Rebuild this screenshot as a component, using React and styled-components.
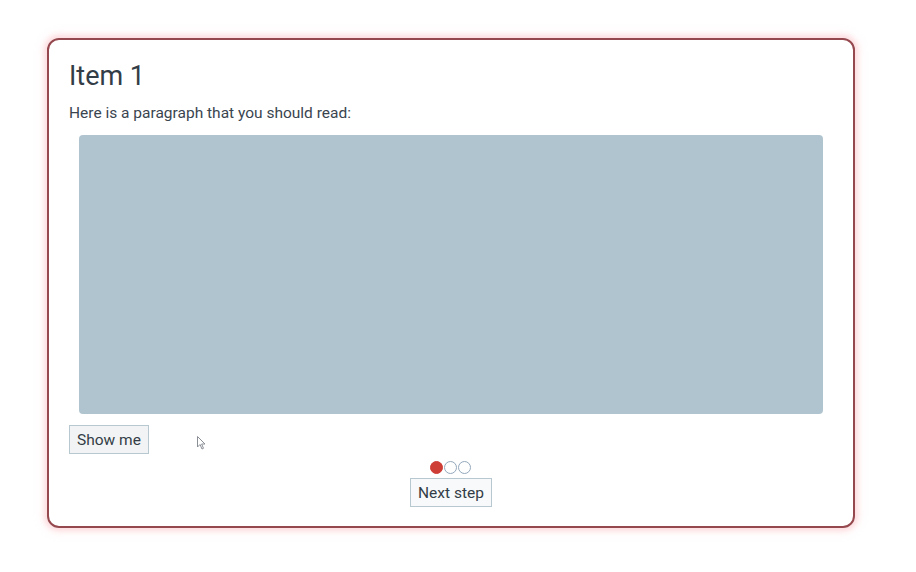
import React from "react";
import styled, { createGlobalStyle } from "styled-components";

const Global = createGlobalStyle`
  html, body { margin: 0; padding: 0; background: #ffffff; }
  body { font-family: Roboto, "Noto Sans", Arial, sans-serif; color: #333e48; }
`;

const Page = styled.div`
  position: relative;
  width: 916px;
  height: 572px;
  padding: 38px 0 0 47px;
  box-sizing: border-box;
`;

const Card = styled.div`
  width: 808px;
  height: 490px;
  box-sizing: border-box;
  border: 2px solid #95484d;
  border-radius: 12px;
  box-shadow: 0 0 4px 3px rgba(240, 120, 130, 0.16), 0 0 10px 4px rgba(255, 190, 195, 0.25);
  padding: 20px 20px 19px 20px;
  display: flex;
  flex-direction: column;
`;

const Title = styled.h2`
  margin: 0;
  font-size: 27px;
  font-weight: 400;
  line-height: 32px;
  color: #333d47;
`;

const Para = styled.p`
  margin: 11px 0 0 0;
  font-size: 15.5px;
  line-height: 20px;
  color: #3a4550;
`;

const Media = styled.div`
  margin: 12px 10px 0 10px;
  height: 279px;
  background: #b0c4d0;
  border-radius: 4px;
`;

const Button = styled.button`
  font-family: Roboto, "Noto Sans", Arial, sans-serif;
  font-size: 15.5px;
  color: #333d47;
  background: ${(p) => (p.$light ? "#f7f9fa" : "#f2f3f4")};
  border: 1px solid #b7c8d1;
  border-radius: 0;
  height: 29px;
  padding: 0 7px;
  cursor: pointer;
`;

const ShowRow = styled.div`
  margin-top: 11px;
  display: flex;
`;

const Footer = styled.div`
  margin-top: 7px;
  display: flex;
  flex-direction: column;
  align-items: center;
  gap: 4px;
`;

const Dots = styled.div`
  display: flex;
  gap: 1px;
  padding-right: 1px;
`;

const Dot = styled.span`
  width: 13px;
  height: 13px;
  box-sizing: border-box;
  border-radius: 50%;
  background: ${(p) => (p.$active ? "#cf3d37" : "#ffffff")};
  border: 1px solid ${(p) => (p.$active ? "#cf3d37" : "#93a8bb")};
`;

const Cursor = styled.svg`
  position: absolute;
  left: 197px;
  top: 436px;
`;

export default function App() {
  return (
    <>
      <Global />
      <Page>
        <Card>
          <Title>Item 1</Title>
          <Para>Here is a paragraph that you should read:</Para>
          <Media />
          <ShowRow>
            <Button>Show me</Button>
          </ShowRow>
          <Footer>
            <Dots>
              <Dot $active />
              <Dot />
              <Dot />
            </Dots>
            <Button $light>Next step</Button>
          </Footer>
        </Card>
        <Cursor width="10" height="15" viewBox="0 0 10 15">
          <path d="M0.5 0.5 L0.5 11 L3 8.5 L5 13 L6.5 12.3 L4.6 8 L8 8 Z" fill="#ffffff" stroke="#8a8f96" strokeWidth="1" />
        </Cursor>
      </Page>
    </>
  );
}
